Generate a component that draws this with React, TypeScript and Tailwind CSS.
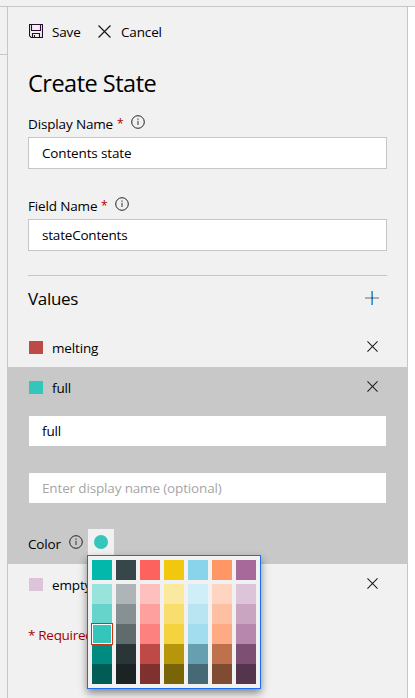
import React from "react";

type IconProps = { className?: string };

const InfoIcon = ({ className = "" }: IconProps) => (
  <svg viewBox="0 0 14 14" className={`h-3.5 w-3.5 shrink-0 ${className}`} fill="none">
    <circle cx="7" cy="7" r="6.3" stroke="#222" strokeWidth="1" />
    <path d="M7 5.8V10" stroke="#333" strokeWidth="1" />
    <path d="M7 3.6V4.8" stroke="#333" strokeWidth="1.1" />
  </svg>
);

const SaveIcon = () => (
  <svg viewBox="0 0 14 14" className="-mt-0.5 h-3.5 w-3.5 shrink-0" fill="none" stroke="#2a0b33" strokeWidth="1.1">
    <path d="M0.5 0.5H13.5V13.5H2.2L0.5 11.8Z" />
    <path d="M2.5 0.5V6.5H11.5V0.5" />
    <path d="M3.5 13.5V9.5H10.5V13.5" />
    <path d="M5.5 11V13.5" />
  </svg>
);

const CloseIcon = ({ className = "" }: IconProps) => (
  <svg viewBox="0 0 12 12" className={`shrink-0 ${className}`} fill="none" stroke="#1a1a1a" strokeWidth="1.1">
    <path d="M0.5 0.5L11.5 11.5M11.5 0.5L0.5 11.5" />
  </svg>
);

const PlusIcon = () => (
  <svg viewBox="0 0 14 14" className="-mt-0.5 h-3.5 w-3.5 shrink-0" fill="none">
    <path d="M0 7H14" stroke="#b0aeb0" strokeWidth="2" />
    <path d="M6.5 0V14" stroke="#d8943c" />
    <path d="M7.5 0V14" stroke="#2f93d0" />
    <path d="M6 7H7" stroke="#8a6a48" strokeWidth="2" />
    <path d="M7 7H8" stroke="#2a5f8c" strokeWidth="2" />
  </svg>
);

const FieldLabel = ({ text, width }: { text: string; width: string }) => (
  <div className="flex h-7 items-start">
    <span className={`${width} mt-[5px] leading-5 whitespace-nowrap`}>{text}</span>
    <span className="mt-[5px] w-3.5 text-[12px] leading-5 text-[#a80000]">*</span>
    <InfoIcon className="mt-[6px]" />
  </div>
);

const ValueRow = ({ name, swatch }: { name: string; swatch: string }) => (
  <div className="flex h-10 items-center pr-[29px] pl-[21px]">
    <span className={`mt-px h-[13px] w-3.5 ${swatch}`} />
    <span className="ml-[9px] flex-1 pt-0.5 leading-5">{name}</span>
    <CloseIcon className="-mt-px h-[11px] w-[11px]" />
  </div>
);

const palette: string[][] = [
  ["bg-[#01b8aa]", "bg-[#99e3dd]", "bg-[#67d4cc]", "bg-[#34c6bb]", "bg-[#018a80]", "bg-[#015c55]"],
  ["bg-[#374649]", "bg-[#afb5b6]", "bg-[#879092]", "bg-[#5f6b6d]", "bg-[#293537]", "bg-[#1c2325]"],
  ["bg-[#fd625e]", "bg-[#fec0bf]", "bg-[#fea19e]", "bg-[#fd817e]", "bg-[#be4a47]", "bg-[#7f312f]"],
  ["bg-[#f2c80f]", "bg-[#fae99f]", "bg-[#f7de6f]", "bg-[#f5d33f]", "bg-[#b6960b]", "bg-[#796408]"],
  ["bg-[#8ad4eb]", "bg-[#d0eef7]", "bg-[#b9e5f3]", "bg-[#a1ddef]", "bg-[#689fb0]", "bg-[#456a76]"],
  ["bg-[#fe9666]", "bg-[#ffd5c2]", "bg-[#fec0a3]", "bg-[#feab85]", "bg-[#bf714d]", "bg-[#7f4b33]"],
  ["bg-[#a66999]", "bg-[#dec4d9]", "bg-[#caa5c2]", "bg-[#b887ad]", "bg-[#7d4f73]", "bg-[#53354d]"],
];

const ColorPicker = () => (
  <div className="absolute top-[26px] left-[-1px] z-10 flex gap-1 border border-[#1a6df0] bg-[#f1f1f1] p-1 shadow-[0_4px_8px_rgba(0,0,0,0.45)]">
    {palette.map((shades, column) => (
      <div key={column} className="flex flex-col">
        {shades.map((shade, row) => (
          <div key={shade} className={`relative h-5 w-5 ${shade} ${row === 0 ? "mb-1" : ""}`}>
            {column === 0 && row === 3 && (
              <span className="absolute -inset-px z-10 border border-[#d2320a]">
                <span className="absolute inset-0 border border-white" />
              </span>
            )}
          </div>
        ))}
      </div>
    ))}
  </div>
);

export default function App() {
  return (
    <div className="flex h-[698px] w-[415px] flex-col overflow-hidden bg-[#f1f1f1] font-['Open_Sans','Noto_Sans',sans-serif] text-[13.5px] tracking-[-0.15px] text-black">
      <div className="h-[7px] shrink-0 border-b border-[#c6c6c6]" />
      <div className="flex min-h-0 flex-1">
        <div className="w-[7px] shrink-0">
          <div className="h-12 border-b border-[#c6c6c6]" />
        </div>
        <main className="w-[401px] shrink-0 border-x border-[#c6c6c6]">
          <header className="flex h-[50px] items-center pl-[21px]">
            <SaveIcon />
            <span className="ml-[9px] w-[46px]">Save</span>
            <CloseIcon className="-mt-px h-[13px] w-[13px]" />
            <span className="ml-[10px]">Cancel</span>
          </header>
          <div className="px-5">
            <h1 className="flex h-[52px] items-center pt-0.5 text-[23.5px] tracking-[-0.5px]">Create State</h1>
            <FieldLabel text="Display Name" width="w-[89px]" />
            <div className="flex h-8 items-center border border-[#c6c6c6] bg-white px-[13px]">Contents state</div>
            <div className="h-[22px]" />
            <FieldLabel text="Field Name" width="w-[73px]" />
            <div className="flex h-8 items-center border border-[#c6c6c6] bg-white px-[13px] tracking-[-0.2px]">stateContents</div>
            <div className="mt-6 flex h-[46px] items-center justify-between border-t border-[#c6c6c6] pr-2">
              <h2 className="text-[17px] tracking-[-0.3px]">Values</h2>
              <PlusIcon />
            </div>
          </div>
          <div className="mt-[6px]">
            <ValueRow name="melting" swatch="bg-[#be4a47]" />
          </div>
          <section className="-mx-px h-[197px] bg-[#c8c8c8] px-px">
            <ValueRow name="full" swatch="bg-[#34c6bb]" />
            <div className="mt-[9px] mr-[21px] ml-[21px] flex h-[30px] items-center bg-white pl-[13px]">full</div>
            <div className="mt-[27px] mr-[21px] ml-[21px] flex h-[30px] items-center bg-white pl-[13px] text-[#a6a6a6]">
              Enter display name (optional)
            </div>
            <div className="mt-[26px] flex items-start pl-5">
              <span className="mt-[5px] w-[41px] leading-5">Color</span>
              <InfoIcon className="mt-[6px]" />
              <div className="relative ml-[5px] flex h-[26px] w-[26px] items-center justify-center bg-[#f1f1f1]">
                <span className="h-3.5 w-3.5 rounded-full bg-[#34c6bb]" />
                <ColorPicker />
              </div>
            </div>
          </section>
          <ValueRow name="empty" swatch="bg-[#dec4d9]" />
          <p className="mt-[21px] pl-5 leading-5 tracking-[-0.3px] text-[#a80000]">* Required</p>
        </main>
        <div className="flex-1 bg-white" />
      </div>
    </div>
  );
}
